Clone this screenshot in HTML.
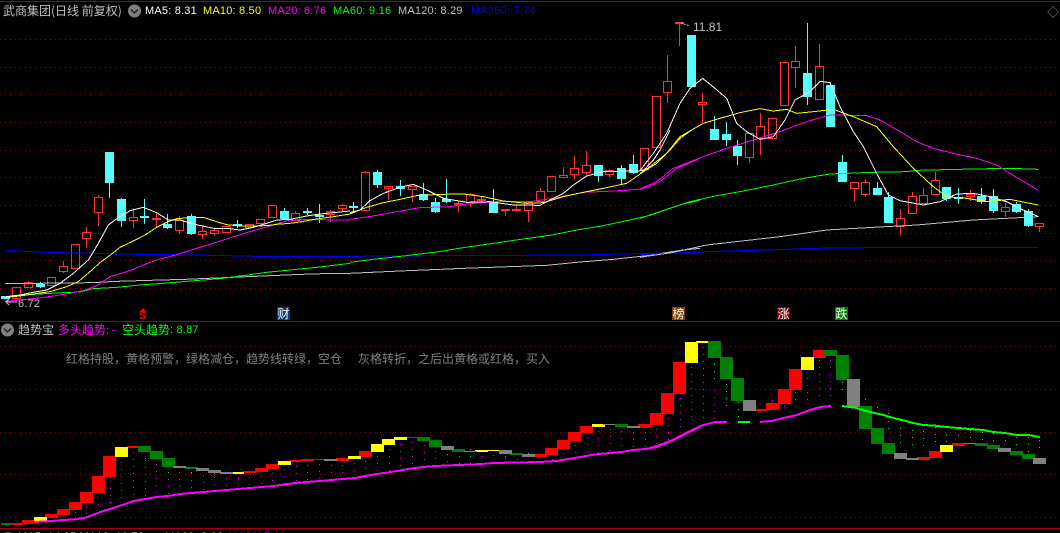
<!DOCTYPE html>
<html><head><meta charset="utf-8"><style>
html,body{margin:0;padding:0;background:#000;width:1060px;height:533px;overflow:hidden}
#a{position:relative;width:1060px;height:533px;overflow:hidden;background:#000;font-family:"Liberation Sans","WenQuanYi Zen Hei","Noto Sans CJK SC",sans-serif}
#a div{position:absolute;white-space:pre;line-height:14px;height:14px}
.c{font-size:12px;font-family:"WenQuanYi Zen Hei","Noto Sans CJK SC",sans-serif}
.n{font-size:11px;letter-spacing:.2px}
.m{width:13px;height:13px!important;line-height:13px!important;font-size:12px;color:#fff;text-align:center;font-family:"WenQuanYi Zen Hei","Noto Sans CJK SC",sans-serif}
svg{position:absolute;left:0;top:0}
polyline{fill:none;stroke-width:1;vector-effect:non-scaling-stroke;shape-rendering:crispEdges}
.t polyline{stroke-width:2}
</style></head><body><div id="a">
<svg width="1060" height="533" viewBox="0 0 1060 533">
<g shape-rendering="crispEdges">
<path d="M0 1.5H1060M0 321.5H1060M0 528.5H1060" stroke="#a80000" fill="none"/>
<path d="M0 39.5H1060M0 67.5H1060M0 94.5H1060M0 122.5H1060M0 150.5H1060M0 177.5H1060M0 205.5H1060M0 233.5H1060M0 260.5H1060M0 288.5H1060M0 346.5H1060M0 389.5H1060M0 432.5H1060M0 474.5H1060M0 517.5H1060" stroke="#a00000" stroke-dasharray="1 4" fill="none"/>
<path fill="none" stroke="#54fcfc" d="M40.5 282V288M109.5 183V198M121.5 198V227M144.5 199V224M167.5 214V229M191.5 214V235M237.5 220V228M284.5 208V219M307.5 208V215M319.5 204V223M353.5 202V212M377.5 170V188M400.5 180V196M423.5 183V201M435.5 198V213M446.5 179V203M493.5 189V213M598.5 176V182M621.5 165V185M633.5 155V174M714.5 116V130M726.5 122V146M737.5 140V165M807.5 23V105M842.5 155V163M877.5 182V195M888.5 192V198M946.5 199V201M958.5 188V204M981.5 188V204M993.5 189V213M1016.5 202V213M1028.5 209V227"/>
<path fill="#54fcfc" d="M1 296h9V299h-9zM36 284h9V287h-9zM105 152h9V183h-9zM117 199h9V221h-9zM140 216h9V218h-9zM163 224h9V228h-9zM187 216h9V234h-9zM233 224h9V226h-9zM280 211h9V219h-9zM303 211h9V213h-9zM315 215h9V217h-9zM349 206h9V208h-9zM373 172h9V185h-9zM396 186h9V189h-9zM419 194h9V200h-9zM431 202h9V212h-9zM442 199h9V202h-9zM489 202h9V213h-9zM594 165h9V176h-9zM617 168h9V179h-9zM629 164h9V173h-9zM687 35h9V87h-9zM710 129h9V140h-9zM722 134h9V140h-9zM733 146h9V156h-9zM803 73h9V97h-9zM826 85h9V127h-9zM838 162h9V182h-9zM873 188h9V195h-9zM884 197h9V223h-9zM942 187h9V199h-9zM954 197h9V199h-9zM977 196h9V202h-9zM989 196h9V211h-9zM1012 204h9V212h-9zM1024 211h9V226h-9z"/>
<path fill="none" stroke="#ff3232" d="M12.500 287.500h8V298.500h-8zM24.500 282.500h8V287.500h-8zM47.500 277.500h8V285.500h-8zM59.500 266.500h8V271.500h-8zM71.500 244.500h8V268.500h-8zM82.500 232.500h8V238.500h-8zM94.500 197.500h8V212.500h-8zM129.500 217.500h8V220.500h-8zM152.500 218.500h8V219.500h-8zM175.500 220.500h8V230.500h-8zM198.500 231.500h8V234.500h-8zM210.500 230.500h8V233.500h-8zM222.500 226.500h8V232.500h-8zM245.500 224.500h8V227.500h-8zM256.500 219.500h8V223.500h-8zM268.500 205.500h8V217.500h-8zM291.500 213.500h8V220.500h-8zM326.500 211.500h8V214.500h-8zM338.500 205.500h8V208.500h-8zM361.500 172.500h8V210.500h-8zM384.500 186.500h8V188.500h-8zM408.500 186.500h8V189.500h-8zM454.500 203.500h8V204.500h-8zM466.500 194.500h8V202.500h-8zM477.500 199.500h8V200.500h-8zM501.500 209.500h8V210.500h-8zM512.500 209.500h8V210.500h-8zM524.500 202.500h8V210.500h-8zM536.500 191.500h8V201.500h-8zM547.500 176.500h8V191.500h-8zM559.500 175.500h8V177.500h-8zM570.500 168.500h8V174.500h-8zM582.500 165.500h8V172.500h-8zM605.500 170.500h8V174.500h-8zM640.500 148.500h8V169.500h-8zM652.500 96.500h8V147.500h-8zM663.500 81.500h8V92.500h-8zM675.500 22.500h8V23.500h-8zM698.500 102.500h8V104.500h-8zM745.500 133.500h8V157.500h-8zM756.500 126.500h8V138.500h-8zM768.500 118.500h8V138.500h-8zM780.500 62.500h8V105.500h-8zM791.500 61.500h8V67.500h-8zM815.500 66.500h8V99.500h-8zM850.500 182.500h8V188.500h-8zM861.500 182.500h8V194.500h-8zM896.500 218.500h8V226.500h-8zM908.500 196.500h8V213.500h-8zM919.500 195.500h8V203.500h-8zM931.500 180.500h8V194.500h-8zM966.500 194.500h8V196.500h-8zM1001.500 207.500h8V211.500h-8zM1035.500 223.500h8V226.500h-8z"/>
<path fill="none" stroke="#ff3232" d="M28.500 281V282M63.500 261V266M63.500 272V273M86.500 227V232M86.500 239V248M98.500 195V197M98.500 213V226M133.500 208V217M133.500 221V228M156.500 214V218M156.500 220V228M179.500 216V220M179.500 231V234M202.500 226V231M202.500 235V239M214.500 229V230M214.500 234V236M295.500 211V213M330.500 210V211M330.500 215V222M342.500 204V205M342.500 209V211M365.500 171V172M388.500 189V200M412.500 190V202M458.500 201V203M458.500 205V212M470.500 193V194M470.500 203V207M481.500 196V199M481.500 201V202M505.500 211V216M516.500 205V209M528.500 201V202M528.500 211V222M540.500 188V191M563.500 167V175M574.500 156V168M574.500 175V179M586.500 151V165M586.500 173V175M609.500 169V170M609.500 175V177M667.500 55V81M667.500 93V103M679.500 24V46M702.500 93V102M702.500 105V123M749.500 158V163M760.500 113V126M760.500 139V155M795.500 46V61M795.500 68V88M819.500 44V66M854.500 189V201M865.500 179V182M865.500 195V197M900.500 209V218M900.500 227V235M912.500 192V196M923.500 188V195M935.500 172V180M970.500 190V194M970.500 197V201M1005.500 203V207M1005.500 212V217M1039.500 227V232"/>
</g>
<polyline stroke="#c0c0c0" points="350,273.300 400,271 440,269.300"/>
<g transform="matrix(.33333 0 0 .33333 0 140)">
<polyline stroke="#0000ff" points="15,331 70,334 138,337 280,340 415,343 590,345 770,349 1050,350"/>
<polyline stroke="#c0c0c0" points="15,430 110,430 275,428 350,424 450,421 555,418 695,412 835,406 905,403 1000,400 1050,400"/>
<polyline stroke="#00ff00" points="15,470 100,463 170,459 240,456 280,446 350,442 420,435 490,430 560,424 660,416 720,408 800,397 880,389 960,381 1050,370"/>
<polyline stroke="#ff00ff" points="15,484 60,480 110,475 160,468 210,460 250,452 290,437 330,410 390,392 430,375 470,360 530,344 580,328 640,310 700,290 760,272 820,255 870,240 930,238 1000,240 1050,240"/>
<polyline stroke="#ffff00" points="15,472 60,468 100,462 150,455 200,440 235,425 270,395 300,368 335,342 360,322 400,303 435,285 470,262 500,247 530,236 580,232 610,232 650,245 680,254 720,258 760,258 800,257 830,253 870,250 900,246 950,237 1000,230 1050,222"/>
<polyline stroke="#ffffff" points="18,470 60,465 100,457 140,450 180,430 220,400 265,360 295,310 325,255 345,240 390,212 430,202 470,218 505,240 540,240 580,252 640,265 680,265 720,270 760,262 800,250 830,240 870,238 920,228 960,222 1000,218 1050,213"/>
</g>
<g transform="matrix(.33333 0 0 .33333 350 130)">
<polyline stroke="#0000ff" points="0,380 60,378 690,375 900,370 1050,368"/>
<polyline stroke="#c0c0c0" points="272,418 340,415 450,411 590,406 690,396 790,388 900,376 960,366 1000,360 1050,355"/>
<polyline stroke="#00ff00" points="0,397 70,388 160,378 260,366 340,353 430,340 520,327 600,316 680,300 760,287 840,270 900,256 960,235 1000,222 1050,210"/>
<polyline stroke="#ff00ff" points="0,268 70,258 140,245 210,233 300,230 350,222 440,215 540,215 610,205 700,187 770,184 830,181 880,176 930,155 980,115 1050,85"/>
<polyline stroke="#ffff00" points="0,252 50,232 100,218 150,208 200,197 270,193 340,192 400,200 460,213 530,220 580,218 640,200 700,187 760,175 830,160 880,125 920,100 960,60 990,25 1025,0"/>
<polyline stroke="#ffffff" points="0,248 30,240 60,212 100,190 150,172 190,163 230,180 280,205 350,217 420,215 490,225 570,226 600,210 640,190 670,165 710,138 760,125 880,122 910,90 930,60 960,0"/>
</g>
<g transform="matrix(.33333 0 0 .33333 640 10)">
<polyline stroke="#0000ff" points="0,734 200,725 380,720 520,715 690,713 1195,712"/>
<polyline stroke="#c0c0c0" points="0,742 100,727 200,705 420,680 560,660 700,652 830,645 1000,630 1195,620"/>
<polyline stroke="#00ff00" points="0,625 60,605 150,575 230,557 300,545 400,525 490,505 570,492 700,487 800,485 830,481 1000,477 1110,475 1195,478"/>
<polyline stroke="#ff00ff" points="0,537 50,515 100,475 190,440 260,415 340,390 420,365 500,335 570,315 680,317 720,330 780,365 830,395 880,415 940,430 1010,445 1070,465 1110,490 1195,541"/>
<polyline stroke="#ffff00" points="0,490 30,470 80,430 120,380 190,340 240,325 300,308 360,296 400,303 440,298 470,310 520,305 580,298 640,320 710,350 760,410 820,475 880,530 920,560 980,565 1040,575 1110,568 1195,585"/>
<polyline stroke="#ffffff" points="0,482 40,430 80,370 120,280 150,235 188,205 225,235 260,265 290,340 320,365 360,388 400,380 435,330 465,270 510,245 540,214 570,218 600,290 640,365 670,410 710,490 745,555 780,572 850,585 900,575 950,552 1000,550 1050,560 1100,575 1150,600 1195,620"/>
</g>
<path d="M681 23L690 26" stroke="#c0c0c0" stroke-dasharray="2 1" fill="none"/>
<path d="M6 302H17M6 302L9 299M6 302L9 305" stroke="#c0c0c0" fill="none"/>
<path d="M1053 6.500L1058.500 12L1053 17.500L1047.500 12Z" stroke="#808080" fill="none" stroke-dasharray="1 1"/>
<path d="M143 308L146.500 312H139.500Z" fill="#ff0000"/>
<circle cx="134.500" cy="11" r="6.500" fill="#808080"/>
<path d="M131 9.500L134.500 13L138 9.500" stroke="#222" stroke-width="1.500" fill="none"/>
<circle cx="7.500" cy="330" r="6.500" fill="#808080"/>
<path d="M4 328.500L7.500 332L11 328.500" stroke="#222" stroke-width="1.500" fill="none"/>
<circle cx="8" cy="537" r="5" fill="#808080"/>
<path shape-rendering="crispEdges" fill="none" stroke="#ff00ff" stroke-dasharray="1 6" d="M63.500 516V520M75.500 512V519M86.500 506V516M98.500 497V511M110.500 481V506M121.500 462V501M133.500 452V498M145.500 460V497M156.500 464V496M168.500 472V494M179.500 472V493M191.500 473V492M203.500 475V491M214.500 477V490M226.500 478V489M238.500 478V488M249.500 477V488M261.500 476V487M272.500 473V486M284.500 469V484M296.500 466V483M307.500 465V482M319.500 464V481M331.500 465V480M342.500 465V479M354.500 463V478M365.500 461V476M377.500 456V474M389.500 449V472M400.500 444V471M412.500 442V468M424.500 445V467M435.500 451V466M447.500 454V466M459.500 456V465M470.500 456V465M482.500 456V464M493.500 455V464M505.500 458V463M517.500 459V463M528.500 461V463M540.500 461V462M552.500 459V462M563.500 453V461M575.500 445V459M587.500 437V457M598.500 431V454M610.500 429V453M621.500 431V453M633.500 432V452M645.500 432V449M656.500 429V447M668.500 418V440M680.500 398V432M691.500 367V422M703.500 347V422M714.500 390V422M772.500 400V412M784.500 406V410M795.500 392V413M807.500 378V402M819.500 360V398M830.500 360V396"/>
<path shape-rendering="crispEdges" fill="none" stroke="#00ff00" stroke-dasharray="1 6" d="M145.500 458V460M168.500 472V478M191.500 472V474M214.500 473V476M447.500 454V456M470.500 449V461M505.500 456V459M528.500 453V460M714.500 364V380M726.500 384V410M738.500 402V423M749.500 400V413M842.500 382V395M865.500 399V405M877.500 407V412M888.500 413V416M888.500 421V435M900.500 428V443M912.500 423V447M923.500 424V450M935.500 427V447M946.500 427V443M958.500 428V442M970.500 430V442M982.500 432V442M993.500 433V442M1005.500 433V445M1016.500 437V450M1028.500 437V453M1039.500 440V452"/>
<g shape-rendering="crispEdges">
<g transform="matrix(.33333 0 0 .33333 0 430)">
<path fill="#ff0000" d="M36 279H69V285H36zM66 270H105V282H66zM135 252H174V264H135zM171 237H210V255H171zM207 216H246V240H207zM240 186H279V219H240zM276 138H315V189H276zM309 78H348V141H309zM381 48H414V54H381zM729 123H768V129H729zM765 114H804V126H765zM798 102H837V117H798zM867 90H906V96H867zM903 87H942V93H903zM1008 84H1047V93H1008zM1077 63H1116V81H1077z"/>
<path fill="#ffff00" d="M102 261H141V273H102zM345 51H384V81H345zM699 126H732V132H699zM834 93H873V105H834zM1044 78H1083V87H1044zM1113 42H1152V66H1113zM1146 27H1185V45H1146zM1182 21H1221V30H1182z"/>
<path fill="#008000" d="M3 279H36V285H3zM414 48H453V66H414zM450 63H489V87H450zM486 84H525V111H486zM555 111H594V117H555zM939 87H975V90H939z"/>
<path fill="#808080" d="M519 108H558V114H519zM588 114H627V123H588zM624 120H663V129H624zM660 126H699V132H660zM972 87H1011V93H972z"/>
</g>
<g transform="matrix(.33333 0 0 .33333 400 400)">
<path fill="#ff0000" d="M21 111H54V114H21zM405 162H441V171H405zM435 144H474V165H435zM471 120H510V147H471zM504 96H543V123H504zM540 78H579V99H540zM714 72H753V84H714zM750 39H789V75H750zM783 0H822V42H783z"/>
<path fill="#ffff00" d="M225 150H264V156H225zM264 150H297V153H264zM576 72H615V81H576z"/>
<path fill="#008000" d="M51 111H90V123H51zM87 120H126V141H87zM156 147H195V156H156zM330 159H369V165H330zM645 72H684V81H645z"/>
<path fill="#808080" d="M123 138H162V150H123zM192 153H231V156H192zM297 150H336V162H297zM366 162H405V171H366zM609 72H645V75H609zM681 78H720V84H681z"/>
</g>
<g transform="matrix(.33333 0 0 .33333 650 335)">
<path fill="#ff0000" d="M0 234H39V270H0zM33 174H72V237H33zM69 81H108V177H69zM318 222H351V228H318zM348 204H387V225H348zM384 162H423V207H384zM417 102H456V165H417zM489 45H528V69H489zM801 366H840V375H801zM837 348H876V369H837zM906 324H945V333H906z"/>
<path fill="#ffff00" d="M105 21H144V84H105zM138 18H177V24H138zM453 66H492V105H453zM870 330H909V351H870z"/>
<path fill="#008000" d="M174 18H213V69H174zM210 66H249V132H210zM243 129H282V198H243zM522 45H561V63H522zM558 60H597V135H558zM627 213H666V282H627zM663 279H702V327H663zM696 324H735V357H696zM975 324H1014V333H975zM1011 330H1050V342H1011zM1080 348H1119V360H1080zM1116 357H1155V372H1116z"/>
<path fill="#808080" d="M279 195H318V228H279zM591 132H630V216H591zM732 354H771V372H732zM768 369H807V375H768zM942 324H975V327H942zM1044 339H1083V351H1044zM1149 369H1188V387H1149z"/>
</g>
</g>
<g class="t">
<g transform="matrix(.33333 0 0 .33333 0 430)">
<polyline stroke="#ff00ff" points="105,276 155,273 190,270 225,268 260,262 285,252 310,243 340,234 370,224 400,213 430,208 470,201 510,197 540,192 575,189 610,186 645,183 680,180 715,177 750,174 785,171 820,168 855,163 885,159 920,156 960,153 995,150 1030,147 1065,144 1095,138 1130,132 1165,127 1200,122"/>
</g>
<g transform="matrix(.33333 0 0 .33333 400 400)">
<polyline stroke="#ff00ff" points="0,211 36,205 70,201 105,198 175,195 245,192 280,189 420,186 470,183 505,177 540,171 575,165 595,162 630,159 665,156 700,150 735,147 770,141 800,129 830,115 860,100 900,80"/>
</g>
<g transform="matrix(.33333 0 0 .33333 650 335)">
<polyline stroke="#ff00ff" points="0,339 30,330 60,318 90,303 120,288 150,273 195,261 231,261"/>
<polyline stroke="#00ff00" points="264,261 300,261"/>
<polyline stroke="#ff00ff" points="330,261 365,258 400,249 440,240 480,225 510,216 543,213"/>
<polyline stroke="#00ff00" points="576,213 620,219 640,226 670,233 700,240 730,249 760,256 790,264 820,270 855,272 890,276 925,279 960,282 1000,285 1030,291 1065,294 1100,300 1135,300 1170,306"/>
</g>
</g>
</svg>
<div class="c" style="left:3px;top:4px;color:#c0c0c0">武商集团(日线 前复权)</div>
<div class="n" style="left:145px;top:4px;color:#fff">MA5: 8.31</div>
<div class="n" style="left:203px;top:4px;color:#ff0">MA10: 8.50</div>
<div class="n" style="left:268px;top:4px;color:#f0f">MA20: 8.76</div>
<div class="n" style="left:333px;top:4px;color:#0f0">MA60: 9.16</div>
<div class="n" style="left:398px;top:4px;color:#c0c0c0">MA120: 8.29</div>
<div class="n" style="left:471px;top:4px;color:#0000ff">MA250: 7.74</div>
<div class="n" style="left:693px;top:20px;color:#c0c0c0;font-size:12px;letter-spacing:0">11.81</div>
<div class="n" style="left:18px;top:297px;color:#c0c0c0">6.72</div>
<div style="left:139px;top:309px;color:#f00;font-size:11px;font-weight:bold;line-height:14px">S</div>
<div class="m" style="left:277px;top:307px;background:#003c78">财</div>
<div class="m" style="left:672px;top:307px;background:#804000">榜</div>
<div class="m" style="left:777px;top:307px;background:#800000">涨</div>
<div class="m" style="left:835px;top:307px;background:#008000">跌</div>
<div class="c" style="left:18px;top:323px;color:#c0c0c0">趋势宝</div>
<div class="c" style="left:58px;top:323px;color:#f0f">多头趋势: -</div>
<div class="c" style="left:122px;top:323px;color:#0f0">空头趋势</div>
<div class="n" style="left:170px;top:323px;color:#0f0">: 8.87</div>
<div class="c" style="left:66px;top:352px;color:#808080">红格持股，黄格预警，绿格减仓，趋势线转绿，空仓</div>
<div class="c" style="left:358px;top:352px;color:#808080">灰格转折，之后出黄格或红格，买入</div>
<div class="n" style="left:18px;top:530px;color:#fff">MA5: 14.05 MA10: 10.72</div>
<div class="n" style="left:165px;top:530px;color:#ff0">MA20: 8.06</div>
<div class="n" style="left:228px;top:530px;color:#f0f">MA60: 7.11</div>
</div></body></html>
